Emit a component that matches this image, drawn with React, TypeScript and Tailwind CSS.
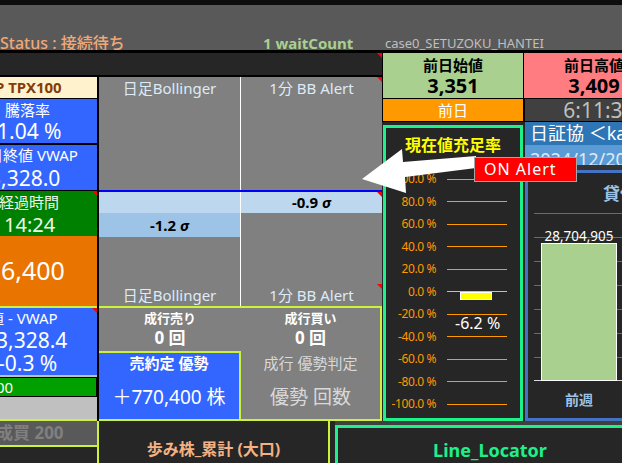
import React from "react";

const Tri = () => (
  <div className="absolute top-0 right-0 w-0 h-0 border-t-[5px] border-l-[5px] border-t-[#ff0000] border-l-transparent" />
);

const ticks = [
  "100.0 %",
  "80.0 %",
  "60.0 %",
  "40.0 %",
  "20.0 %",
  "0.0 %",
  "-20.0 %",
  "-40.0 %",
  "-60.0 %",
  "-80.0 %",
  "-100.0 %",
];

function LeftCol() {
  return (
    <div className="w-[97px] flex flex-col overflow-hidden text-white whitespace-nowrap">
      <div className="h-[21px] bg-[#fff2cc] text-[15px] font-bold text-[#843c0b] leading-[21px]">
        <div className="-ml-[5px]">P TPX100</div>
      </div>
      <div className="h-px bg-black" />
      <div className="h-[44px] bg-[#3366ff] pt-[1px]">
        <div className="text-[15px] leading-[20px] pl-[5px]">騰落率</div>
        <div className="text-[21px] leading-[23px] -ml-[3px]">1.04 %</div>
      </div>
      <div className="h-[2px] bg-black" />
      <div className="h-[45px] bg-[#3366ff]">
        <div className="text-[15px] leading-[20px] -ml-[12px]">日終値 VWAP</div>
        <div className="text-[21px] leading-[26px] -ml-[11px]">3,328.0</div>
      </div>
      <div className="h-px bg-black" />
      <div className="relative h-[45px] bg-[#008000] pt-[1px] text-[#f0f7ec]">
        <div className="text-[15px] leading-[20px] -ml-[1px]">経過時間</div>
        <div className="text-[20px] leading-[26px] pl-[4px]">14:24</div>
        <Tri />
      </div>
      <div className="h-[70px] bg-[#e97500] flex items-center pl-[1px] text-[25px]">6,400</div>
      <div className="h-[2px] bg-[#cdf23c]" />
      <div className="relative h-[67px] bg-[#3366ff]">
        <div className="text-[15px] leading-[20px] -ml-[11px]">値 - VWAP</div>
        <div className="text-[21px] leading-[24px] -ml-[4px]">3,328.4</div>
        <div className="text-[21px] leading-[22px] -ml-[2px]">-0.3 %</div>
        <Tri />
      </div>
      <div className="h-[2px] bg-[#c0c0c0]" />
      <div className="h-[20px] bg-[#00a000] border border-l-0 border-black text-[15px] leading-[18px]">
        <div className="-ml-[4px]">00</div>
      </div>
      <div className="flex-1 bg-[#c0c0c0]" />
      <div className="h-[2px] bg-[#cdf23c]" />
    </div>
  );
}

function Middle() {
  return (
    <div className="w-[283px] flex flex-col">
      <div className="h-[229px] bg-[#808080] flex flex-col text-[#ddebf7] text-[15px] whitespace-nowrap">
        <div className="h-[113px] flex">
          <div className="w-[141px] text-center leading-[20px] pt-[1px]">日足Bollinger</div>
          <div className="w-px bg-white" />
          <div className="relative flex-1 text-center leading-[20px] pt-[1px]">
            1分 BB Alert
            <Tri />
          </div>
        </div>
        <div className="h-[2px] bg-[#0000ff]" />
        <div className="h-[21px] flex">
          <div className="w-[141px] bg-[#bdd7ee]" />
          <div className="w-px bg-white" />
          <div className="relative flex-1 bg-[#bdd7ee] text-center text-black font-bold text-[15px] leading-[21px]">
            -0.9 <span className="italic">σ</span>
            <Tri />
          </div>
        </div>
        <div className="h-[24px] flex">
          <div className="w-[141px] bg-[#9dc3e6] text-center text-black font-bold text-[15px] leading-[24px]">
            -1.2 <span className="italic">σ</span>
          </div>
          <div className="w-px bg-white" />
          <div className="flex-1" />
        </div>
        <div className="flex-1 flex">
          <div className="w-[141px] flex items-end justify-center leading-[20px] pb-[1px]">日足Bollinger</div>
          <div className="w-px bg-white" />
          <div className="flex-1 flex flex-col justify-end">
            <div className="relative h-[22px] text-center leading-[20px] pt-[1px]">
              1分 BB Alert
              <Tri />
            </div>
          </div>
        </div>
      </div>
      <div className="h-[2px] bg-[#cdf23c]" />
      <div className="h-[111px] flex bg-[#808080] border-r-2 border-[#cdf23c] text-white whitespace-nowrap">
        <div className="w-[142px] flex flex-col">
          <div className="h-[43px] text-center font-bold pt-[1px]">
            <div className="text-[13px] leading-[18px]">成行売り</div>
            <div className="text-[17px] leading-[22px]">0 回</div>
          </div>
          <div className="h-[2px] bg-[#cdf23c]" />
          <div className="flex-1 flex">
            <div className="flex-1 bg-[#3366ff] text-center">
              <div className="text-[15px] font-bold leading-[20px]">売約定 優勢</div>
              <div className="text-[19px] leading-[28px] mt-[10px]">＋770,400 株</div>
            </div>
            <div className="w-[2px] bg-[#cdf23c]" />
          </div>
        </div>
        <div className="flex-1 text-center pt-[1px]">
          <div className="text-[13px] font-bold leading-[18px]">成行買い</div>
          <div className="text-[17px] font-bold leading-[22px]">0 回</div>
          <div className="text-[15px] leading-[20px] text-[#d9d9d9] mt-[4px]">成行 優勢判定</div>
          <div className="text-[19px] leading-[28px] text-[#d9d9d9] mt-[10px]">優勢 回数</div>
        </div>
      </div>
      <div className="h-[2px] bg-[#cdf23c]" />
    </div>
  );
}

function Gauge() {
  return (
    <div className="w-[140px] mt-[3px] border-[3px] border-[#1ef08a] bg-[#262626] flex flex-col">
      <div className="text-center text-[16px] font-bold text-[#ffff00] leading-[22px] pt-[6px] whitespace-nowrap">
        現在値充足率
      </div>
      <div className="mt-[12px] flex flex-col">
        {ticks.map((t, i) => (
          <div key={t} className="h-[22.5px] flex items-center">
            <span className="w-[50px] text-right text-[12px] leading-none text-[#ff9900] whitespace-nowrap tracking-[-0.4px]">
              {t}
            </span>
            <div className={i === 5 ? "ml-[11px] w-[60px] h-px relative bg-[#bfbfbf]" : "ml-[11px] w-[60px] h-px relative bg-[#ff9900]"}>
              {i === 5 && (
                <>
                  <div className="absolute left-[13px] top-[1px] w-[32px] h-[8px] bg-[#ffff00] border border-white" />
                  <div className="absolute left-[8px] top-[22px] text-[16px] leading-[20px] text-white whitespace-nowrap">
                    -6.2 %
                  </div>
                </>
              )}
            </div>
          </div>
        ))}
      </div>
    </div>
  );
}

function RightPanel() {
  const grid = [40, 64, 88, 112, 136, 160, 184];
  return (
    <div className="flex-1 flex flex-col overflow-hidden whitespace-nowrap">
      <div className="h-[23px] bg-[#2e75b6] text-white text-[18px] leading-[23px] pl-[5px] overflow-hidden">
        日証協 ＜karauri＞
      </div>
      <div className="h-[20px] bg-[#5b9bd5] text-[#ddebf7] text-[18px] leading-[20px] pt-[4px] pl-[5px] overflow-hidden">
        2024/12/20
      </div>
      <div className="h-[5px] bg-[#333333]" />
      <div className="flex-1 relative border-l-[3px] border-t-[3px] border-b-[3px] border-[#4472c4] bg-[#262626] overflow-hidden">
        <div className="absolute left-[75px] top-[10px] text-[17px] font-bold leading-[22px] text-[#9dc3e6]">
          貸借倍率
        </div>
        {grid.map((g) => (
          <div key={g} className="absolute left-[6px] right-0 h-px bg-[#a9582a]" style={{ top: g }} />
        ))}
        <div className="absolute left-[6px] right-0 top-[207px] h-px bg-[#d9d9d9]" />
        <div className="absolute left-[13px] top-[70px] w-[76px] h-[138px] bg-[#a9d08e] border border-white" />
        <div className="absolute left-[6px] w-[90px] top-[53px] text-center text-[13.5px] leading-[20px] text-white">
          28,704,905
        </div>
        <div className="absolute left-[13px] w-[76px] top-[217px] text-center text-[14px] font-bold leading-[20px] text-[#9dc3e6]">
          前週
        </div>
      </div>
    </div>
  );
}

function RightBlock() {
  return (
    <div className="w-[240px] flex flex-col bg-[#262626]">
      <div className="h-[45px] flex">
        <div className="w-px bg-black" />
        <div className="w-[140px] bg-[#a9d08e] text-center font-bold text-black pt-[1px]">
          <div className="text-[15px] leading-[22px]">前日始値</div>
          <div className="text-[20px] leading-[20px]">3,351</div>
        </div>
        <div className="w-px bg-black" />
        <div className="flex-1 overflow-hidden">
          <div className="w-[140px] h-full bg-[#ff7c80] text-center font-bold text-black pt-[1px] whitespace-nowrap">
            <div className="text-[15px] leading-[22px]">前日高値</div>
            <div className="text-[20px] leading-[20px]">3,409</div>
          </div>
        </div>
      </div>
      <div className="h-px bg-black" />
      <div className="h-[22px] flex">
        <div className="w-px bg-black" />
        <div className="w-[140px] bg-[#ff9900] text-white text-center text-[15px] leading-[22px]">前日</div>
        <div className="w-[2px] bg-black" />
        <div className="flex-1 overflow-hidden bg-[#404040]">
          <div className="w-[140px] text-center text-[21px] leading-[22px] text-[#bfbfbf] pl-[8px] whitespace-nowrap">
            6:11:36
          </div>
        </div>
      </div>
      <div className="h-px bg-black" />
      <div className="flex-1 flex">
        <div className="w-px" />
        <Gauge />
        <div className="w-[2px]" />
        <RightPanel />
      </div>
    </div>
  );
}

function BottomRow() {
  return (
    <div className="flex-1 flex whitespace-nowrap">
      <div className="w-[97px] flex flex-col overflow-hidden">
        <div className="h-[24px] bg-[#595959] text-[17px] font-bold text-[#808080] leading-[24px]">
          <div className="-ml-[4px]">成買 200</div>
        </div>
        <div className="h-[2px] bg-[#cdf23c]" />
        <div className="flex-1 bg-[#262626]" />
      </div>
      <div className="w-[233px] border-x-2 border-[#cdf23c] bg-[#262626] text-center text-[16px] font-bold text-[#f4b183] leading-[20px] pt-[18px]">
        歩み株_累計 (大口)
      </div>
      <div className="w-[5px]" />
      <div className="flex-1 flex flex-col">
        <div className="h-[4px] bg-[#3f3f3f]" />
        <div className="flex-1 border-t-[3px] border-l-[3px] border-[#1ef08a] text-[#1ef08a] text-[18px] font-bold text-center leading-[20px] pt-[12px] pl-[20px]">
          Line_Locator
        </div>
      </div>
    </div>
  );
}

export default function App() {
  return (
    <div className="relative w-[622px] h-[463px] overflow-hidden bg-[#262626] flex flex-col font-['Noto_Sans','Noto_Sans_CJK_JP',sans-serif]">
      <div className="h-[5px] bg-[#0d0d0d] shrink-0" />
      <div className="h-[45px] shrink-0 bg-[#595959] flex items-start pt-[27px] leading-[22px] whitespace-nowrap">
        <span className="w-[263px] text-[16px] font-medium text-[#f0a878]">Status : 接続待ち</span>
        <span className="w-[122px] text-[15px] font-bold text-[#a9d08e]">1 waitCount</span>
        <span className="text-[13px] text-[#bfbfbf]">case0_SETUZOKU_HANTEI</span>
      </div>
      <div className="h-[3px] bg-black shrink-0" />
      <div className="h-[368px] shrink-0 flex">
        <div className="w-[382px] flex flex-col">
          <div className="relative h-[22px] bg-[#262626]">
            <Tri />
          </div>
          <div className="h-[2px] bg-black" />
          <div className="flex-1 flex">
            <LeftCol />
            <div className="w-[2px] bg-black" />
            <Middle />
          </div>
        </div>
        <RightBlock />
      </div>
      <BottomRow />

      <svg className="absolute left-[355px] top-[135px]" width="125" height="65" viewBox="0 0 125 65">
        <polygon points="7,44 47,14 48,27 121,21 121,33 50,42 51,58" fill="#ffffff" />
      </svg>
      <div className="absolute left-[474px] top-[157px] w-[103px] h-[25px] bg-[#ff0000] border border-[#a6a6a6] text-white text-[16px] leading-[23px] pl-[9px] tracking-[1px] whitespace-nowrap">
        ON Alert
      </div>
    </div>
  );
}
